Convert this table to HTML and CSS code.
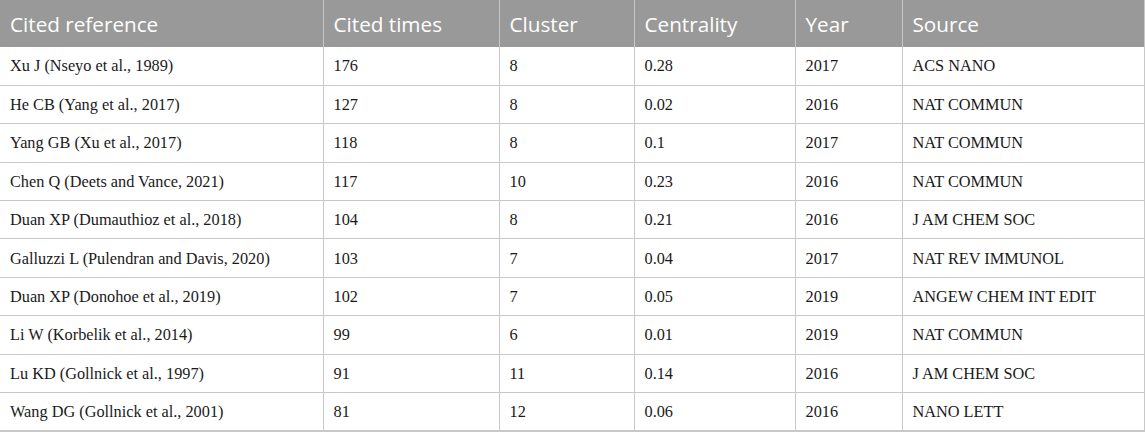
FILE: index.html
```html
<!DOCTYPE html>
<html>
<head>
<meta charset="utf-8">
<link rel="stylesheet" href="styles.css">
</head>
<body>
<table class="refs">
  <colgroup>
    <col class="c1"><col class="c2"><col class="c3"><col class="c4"><col class="c5"><col class="c6">
  </colgroup>
  <thead>
    <tr><th>Cited reference</th><th>Cited times</th><th>Cluster</th><th>Centrality</th><th>Year</th><th>Source</th></tr>
  </thead>
  <tbody>
    <tr><td>Xu J (Nseyo et al., 1989)</td><td>176</td><td>8</td><td>0.28</td><td>2017</td><td>ACS NANO</td></tr>
    <tr><td>He CB (Yang et al., 2017)</td><td>127</td><td>8</td><td>0.02</td><td>2016</td><td>NAT COMMUN</td></tr>
    <tr><td>Yang GB (Xu et al., 2017)</td><td>118</td><td>8</td><td>0.1</td><td>2017</td><td>NAT COMMUN</td></tr>
    <tr><td>Chen Q (Deets and Vance, 2021)</td><td>117</td><td>10</td><td>0.23</td><td>2016</td><td>NAT COMMUN</td></tr>
    <tr><td>Duan XP (Dumauthioz et al., 2018)</td><td>104</td><td>8</td><td>0.21</td><td>2016</td><td>J AM CHEM SOC</td></tr>
    <tr><td>Galluzzi L (Pulendran and Davis, 2020)</td><td>103</td><td>7</td><td>0.04</td><td>2017</td><td>NAT REV IMMUNOL</td></tr>
    <tr><td>Duan XP (Donohoe et al., 2019)</td><td>102</td><td>7</td><td>0.05</td><td>2019</td><td>ANGEW CHEM INT EDIT</td></tr>
    <tr><td>Li W (Korbelik et al., 2014)</td><td>99</td><td>6</td><td>0.01</td><td>2019</td><td>NAT COMMUN</td></tr>
    <tr><td>Lu KD (Gollnick et al., 1997)</td><td>91</td><td>11</td><td>0.14</td><td>2016</td><td>J AM CHEM SOC</td></tr>
    <tr><td>Wang DG (Gollnick et al., 2001)</td><td>81</td><td>12</td><td>0.06</td><td>2016</td><td>NANO LETT</td></tr>
  </tbody>
</table>
</body>
</html>
```

FILE: styles.css
```css
html, body {
  margin: 0;
  padding: 0;
  background: #ffffff;
}

.refs {
  width: 1144px;
  border-collapse: collapse;
  table-layout: fixed;
}

.c1 { width: 323px; }
.c2 { width: 176px; }
.c3 { width: 135px; }
.c4 { width: 161px; }
.c5 { width: 107px; }
.c6 { width: 242px; }

.refs th {
  height: 47px;
  padding: 0 10px;
  box-sizing: border-box;
  background: #999999;
  color: #ffffff;
  font-family: "Open Sans", "Noto Sans", sans-serif;
  font-size: 20.7px;
  font-weight: 400;
  text-align: left;
  vertical-align: middle;
  border-left: 1px solid #c8c8c8;
  white-space: nowrap;
}

.refs th:first-child {
  border-left: none;
}

.refs th:last-child {
  border-right: 1px solid #c8c8c8;
}

.refs td {
  height: 38.4px;
  padding: 1px 10px 0;
  box-sizing: border-box;
  font-family: "Liberation Serif", "Times New Roman", serif;
  font-size: 16.3px;
  color: #1a1a1a;
  text-align: left;
  vertical-align: middle;
  border-left: 1px solid #c8c8c8;
  border-bottom: 1px solid #c8c8c8;
  white-space: nowrap;
}

.refs td:first-child {
  border-left: none;
}

.refs td:last-child {
  border-right: 1px solid #c8c8c8;
}

.refs tbody tr:last-child td {
  border-bottom: 2px solid #c8c8c8;
}
```
